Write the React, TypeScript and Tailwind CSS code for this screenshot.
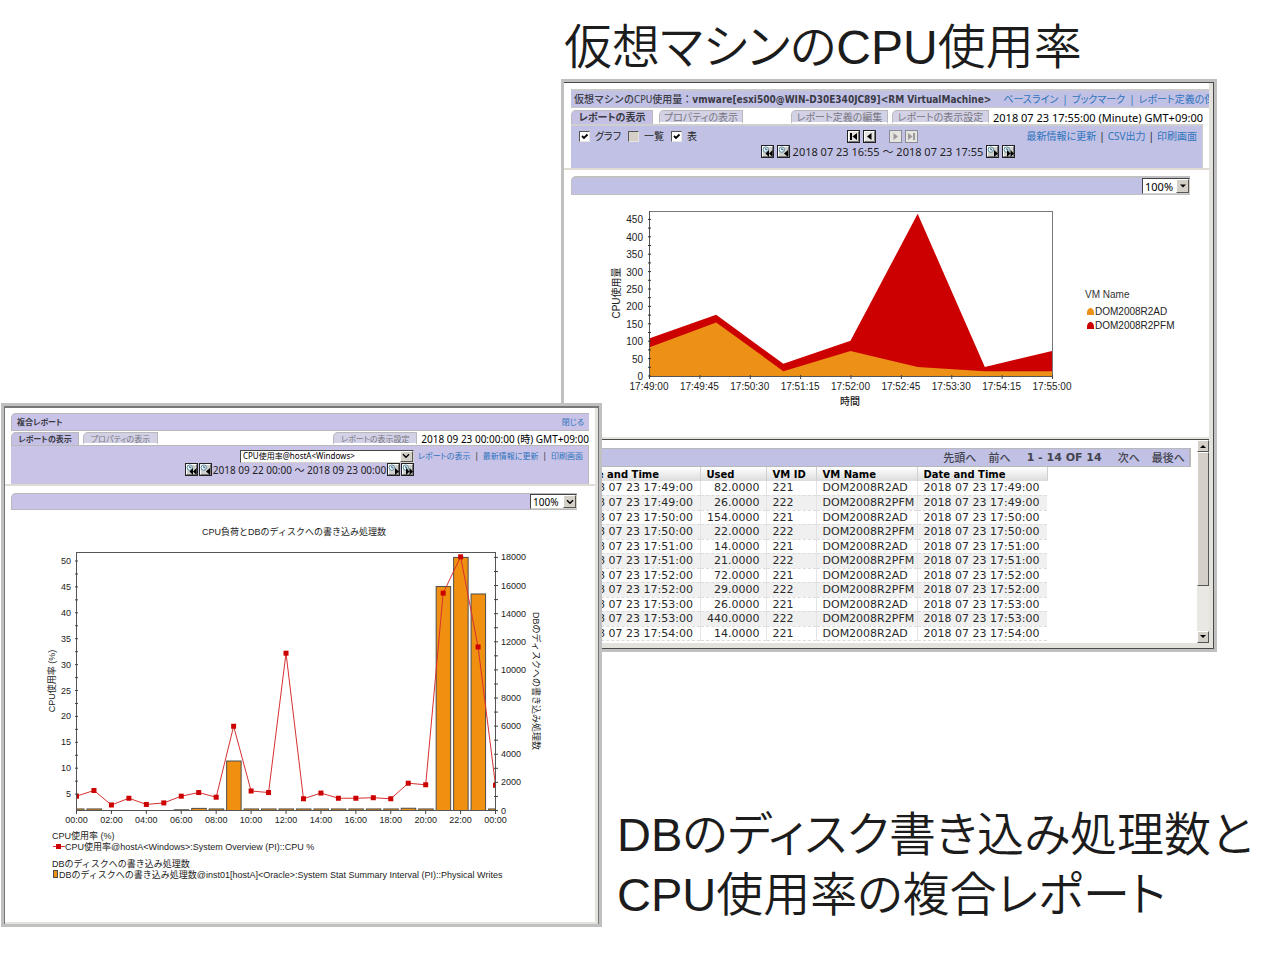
import type { ReactNode } from "react";
import clsx from "clsx";

const UI_FONT = "font-['Noto_Sans','Noto_Sans_CJK_JP',sans-serif] font-normal [font-feature-settings:'palt']";
const CHART_FONT = "font-['Liberation_Sans','Noto_Sans_CJK_JP',sans-serif] [font-feature-settings:normal]";

const vmRows = [
  { time: "2018 07 23 17:49:00", used: "82.0000", id: "221", name: "DOM2008R2AD" },
  { time: "2018 07 23 17:49:00", used: "26.0000", id: "222", name: "DOM2008R2PFM" },
  { time: "2018 07 23 17:50:00", used: "154.0000", id: "221", name: "DOM2008R2AD" },
  { time: "2018 07 23 17:50:00", used: "22.0000", id: "222", name: "DOM2008R2PFM" },
  { time: "2018 07 23 17:51:00", used: "14.0000", id: "221", name: "DOM2008R2AD" },
  { time: "2018 07 23 17:51:00", used: "21.0000", id: "222", name: "DOM2008R2PFM" },
  { time: "2018 07 23 17:52:00", used: "72.0000", id: "221", name: "DOM2008R2AD" },
  { time: "2018 07 23 17:52:00", used: "29.0000", id: "222", name: "DOM2008R2PFM" },
  { time: "2018 07 23 17:53:00", used: "26.0000", id: "221", name: "DOM2008R2AD" },
  { time: "2018 07 23 17:53:00", used: "440.0000", id: "222", name: "DOM2008R2PFM" },
  { time: "2018 07 23 17:54:00", used: "14.0000", id: "221", name: "DOM2008R2AD" },
];

const areaAd = [82, 154, 14, 72, 26, 14, 14];
const areaTotal = [108, 176, 35, 101, 466, 26, 72];
const areaTimes = ["17:49:00", "17:49:45", "17:50:30", "17:51:15", "17:52:00", "17:52:45", "17:53:30", "17:54:15", "17:55:00"];

const cpuLoad = [
  4.6, 5.7, 2.9, 4.2, 3, 3.3, 4.6, 5.3, 4.4, 18.1, 5.6, 5.3, 32.2,
  4.1, 5.2, 4.2, 4.2, 4.3, 4.1, 7.1, 6.8, 43.8, 50.8, 33.4, 6.7,
];
const diskWrites = [
  110, 110, 0, 0, 0, 0, 50, 150, 110, 3520, 110, 110, 110,
  110, 110, 110, 110, 110, 110, 160, 110, 15930, 18000, 15400, 110,
];

type IconKind = "first" | "prev" | "next" | "last" | "clockFirst" | "clockPrev" | "clockNext" | "clockLast";

const IconButton = ({ kind, label, disabled }: { kind: IconKind; label: string; disabled?: boolean }) => {
  const clock = kind.startsWith("clock");
  return (
    <button type="button" aria-label={label} disabled={disabled} className="block size-[13px] shrink-0">
      <svg viewBox="0 0 13 13" className="block size-full">
        <rect x="0.5" y="0.5" width="12" height="12" fill={clock ? "#d0d0cc" : "#e6e4e0"} stroke={disabled ? "#8c8c94" : "#222"} />
        {!disabled && <path d="M1.5 11.5V1.5h10" fill="none" stroke="#fff" />}
        {!disabled && <path d="M1.5 11.5h10V1.5" fill="none" stroke="#77777a" />}
        {clock && <circle cx="4.8" cy="4.6" r="2.7" fill="#e8fbff" stroke="#5b8ba0" />}
        {clock && <path d="M4.8 3v1.8h1.6" fill="none" stroke="#234" strokeWidth="0.8" />}
        <g fill={disabled ? "#9a9a9a" : "#000"}>
          {kind === "first" && <path d="M3 3h2v7H3zM10 3v7L5.5 6.5z" />}
          {kind === "prev" && <path d="M8.5 3v7L4 6.5z" />}
          {kind === "next" && <path d="M4.5 3v7L9 6.5z" />}
          {kind === "last" && <path d="M8 3h2v7H8zM3 3v7l4.5-3.5z" />}
          {kind === "clockFirst" && <path d="M8 5v7L4.500 8.500zM11.500 5v7L8 8.500z" />}
          {kind === "clockPrev" && <path d="M11 5v7L7 8.500z" />}
          {kind === "clockNext" && <path d="M8 5v7l4-3.500z" />}
          {kind === "clockLast" && <path d="M5 5v7l3.500-3.500zM8.500 5v7L12 8.500z" />}
        </g>
      </svg>
    </button>
  );
};

const Tab = ({ active, className, children }: { active?: boolean; className: string; children: ReactNode }) => (
  <button
    type="button"
    className={clsx(
      "h-full shrink-0 whitespace-nowrap rounded-tl-[5px] border-l border-t border-r border-[#b9b9bd] text-center",
      active ? "bg-[#c5c1e5] font-bold text-[#3a3a44]" : "border-b-2 border-b-white bg-[#d3d1e6] text-[#77777f]",
      className
    )}
  >
    {children}
  </button>
);

const Check = ({ label, checked, disabled }: { label: string; checked?: boolean; disabled?: boolean }) => (
  <label className="flex items-center gap-[5px]">
    <span className="relative block size-[11px]">
      <input
        type="checkbox"
        defaultChecked={checked}
        disabled={disabled}
        className="peer block size-[11px] appearance-none border border-b-[#e8e6e0] border-l-[#555] border-r-[#e8e6e0] border-t-[#555] bg-white disabled:bg-[#d4d0c8]"
      />
      <svg viewBox="0 0 11 11" className="pointer-events-none absolute inset-0 hidden size-[11px] peer-checked:block">
        <path d="M3 5l2 2 3.500-3.500" fill="none" stroke="#000" strokeWidth="1.8" />
      </svg>
    </span>
    {label}
  </label>
);

const Select = ({ label, value, solid, className }: { label: string; value: string; solid?: boolean; className: string }) => (
  <span className={clsx("relative block shrink-0", className)}>
    <select
      aria-label={label}
      className="block size-full appearance-none border border-b-[#d4d0c8] border-l-[#444] border-r-[#d4d0c8] border-t-[#444] bg-white pl-0.5 leading-none text-black"
    >
      <option>{value}</option>
    </select>
    <span className="pointer-events-none absolute inset-y-px right-px flex w-[13px] items-center justify-center border border-b-[#555] border-l-white border-r-[#555] border-t-white bg-[#d4d0c8]">
      <svg viewBox="0 0 8 6" className="h-1.5 w-2">
        {solid ? <path d="M1 1.5h6L4 4.5z" /> : <path d="M1 1.2l3 3 3-3" fill="none" stroke="#000" strokeWidth="1.4" />}
      </svg>
    </span>
  </span>
);

const Link = ({ children }: { children: ReactNode }) => (
  <a href="#" className="text-[#2f74bd]">{children}</a>
);

const AreaChart = () => {
  const x = (i: number, n: number) => 85 + (403 * i) / n;
  const y = (v: number) => 181 - v * 0.348;
  const line = (data: number[]) => data.map((v, i) => `${x(i, 6)},${y(v)}`).join(" ");

  return (
    <svg viewBox="0 0 645 238" className={clsx("block w-full text-[10px]", CHART_FONT)}>
      <rect x="85.5" y="16.5" width="403" height="165" fill="#fff" stroke="#777" />
      <polygon points={`85,181 ${line(areaTotal)} 488,181`} fill="#cc0000" />
      <polygon points={`85,181 ${line(areaAd)} 488,181`} fill="#ec9016" />
      <path d="M85.5 16v165.5H489" fill="none" stroke="#555" />
      {Array.from({ length: 19 }, (_, i) => (
        <path key={i} d={`M84 ${y(i * 25)}h3`} stroke="#333" />
      ))}
      {Array.from({ length: 10 }, (_, i) => (
        <text key={i} x="79" y={y(i * 50) + 4} textAnchor="end" fill="#222">{i * 50}</text>
      ))}
      {areaTimes.map((time, i) => (
        <g key={time}>
          <path d={`M${x(i, 8) + 0.5} 180v4`} stroke="#444" />
          <text x={x(i, 8)} y="195" textAnchor="middle" fill="#222">{time}</text>
        </g>
      ))}
      <text x="286" y="210" textAnchor="middle" fill="#222" className="font-medium">時間</text>
      <text transform="translate(56 98) rotate(-90)" textAnchor="middle" fill="#222">CPU使用量</text>
      <text x="521" y="103" fill="#333">VM Name</text>
      <path d="M523 120v-3q1-4 3.500-4t3.500 4v3z" fill="#ec9016" />
      <text x="531" y="120" fill="#222">DOM2008R2AD</text>
      <path d="M523 134v-3q1-4 3.500-4t3.500 4v3z" fill="#cc0000" />
      <text x="531" y="134" fill="#222">DOM2008R2PFM</text>
    </svg>
  );
};

const ComboChart = () => {
  const x = (hour: number) => 71.5 + hour * 17.46;
  const yCpu = (v: number) => 51 + (50 - v) * 5.18;
  const yDisk = (v: number) => 300.5 - v * 0.01406;

  return (
    <svg viewBox="0 0 590 412" className={clsx("block w-full text-[9px]", CHART_FONT)}>
      <text x="289" y="25" textAnchor="middle" fill="#222">CPU負荷とDBのディスクへの書き込み処理数</text>
      <clipPath id="comboPlot">
        <rect x="71" y="42" width="420" height="259" />
      </clipPath>
      <path d="M71.5 300.5V42.5H490.5V300.5z" fill="#fff" stroke="#555" />
      <g clipPath="url(#comboPlot)">
        {diskWrites.map((v, hour) => (
          v > 0 && (
            <rect key={hour} x={x(hour) - 7} y={yDisk(v)} width="14.5" height={300.5 - yDisk(v)} fill="#f09010" stroke="#4d4d4d" />
          )
        ))}
        <polyline points={cpuLoad.map((v, hour) => `${x(hour)},${yCpu(v)}`).join(" ")} fill="none" stroke="#d83030" />
        {cpuLoad.map((v, hour) => (
          <rect key={hour} x={x(hour) - 2.5} y={yCpu(v) - 2.5} width="5" height="5" fill="#cc0000" />
        ))}
      </g>
      <path d="M71.5 42V300.5H490.5V42" fill="none" stroke="#555" />
      {Array.from({ length: 19 }, (_, i) => (
        <path key={i} d={`M70 ${yCpu(5 + i * 2.5)}h3M489 ${yDisk(i * 1000)}h4`} stroke="#444" />
      ))}
      {Array.from({ length: 10 }, (_, i) => (
        <g key={i} fill="#222">
          <text x="66" y={yCpu(5 + i * 5) + 3} textAnchor="end">{5 + i * 5}</text>
          <text x="496" y={yDisk(i * 2000) + 3}>{i * 2000}</text>
        </g>
      ))}
      {Array.from({ length: 13 }, (_, i) => (
        <g key={i}>
          <path d={`M${x(i * 2)} 300v4`} stroke="#444" />
          <text x={x(i * 2)} y="313" textAnchor="middle" fill="#222">
            {`${String((i * 2) % 24).padStart(2, "0")}:00`}
          </text>
        </g>
      ))}
      <text transform="translate(50 171) rotate(-90)" textAnchor="middle" fill="#222">CPU使用率 (%)</text>
      <text transform="translate(528 171) rotate(90)" textAnchor="middle" fill="#222">DBのディスクへの書き込み処理数</text>
      <text x="47" y="329" fill="#222">CPU使用率 (%)</text>
      <path d="M48 336.5h12" stroke="#d83030" />
      <rect x="51" y="334" width="5" height="5" fill="#cc0000" />
      <text x="60" y="340" fill="#222">CPU使用率@hostA&lt;Windows&gt;:System Overview (PI)::CPU %</text>
      <text x="47" y="357" fill="#222">DBのディスクへの書き込み処理数</text>
      <rect x="48.5" y="360.5" width="4" height="7" fill="#f09010" stroke="#4d4d4d" />
      <text x="54" y="368" fill="#222">
        DBのディスクへの書き込み処理数@inst01[hostA]&lt;Oracle&gt;:System Stat Summary Interval (PI)::Physical Writes
      </text>
    </svg>
  );
};

const ResultTable = () => (
  <table className="w-[476px] table-fixed border-collapse font-['DejaVu_Sans',sans-serif] text-[11px] leading-[13px] text-[#2a2a2a]">
    <colgroup>
      <col className="w-[129px]" />
      <col className="w-[66px]" />
      <col className="w-[50px]" />
      <col className="w-[101px]" />
      <col className="w-[130px]" />
    </colgroup>
    <thead>
      <tr className="h-[14px] bg-linear-to-b from-white to-[#dcdcdc] text-left text-[10px] text-black">
        {["Date and Time", "Used", "VM ID", "VM Name", "Date and Time"].map((title, i) => (
          <th key={i} className="border-r border-[#d0d0d0] p-0 pl-1.5 font-bold">{title}</th>
        ))}
      </tr>
    </thead>
    <tbody>
      {vmRows.map((row, i) => (
        <tr key={i} className="border-b border-dashed border-[#dcdcdc] odd:h-[14px] even:h-[15px] even:bg-[#f0f0f0]">
          <td className="border-r border-[#e4e4e4] p-0 pl-1.5">{row.time}</td>
          <td className="border-r border-[#e4e4e4] p-0 pr-1.5 text-right">{row.used}</td>
          <td className="border-r border-[#e4e4e4] p-0 pl-1.5">{row.id}</td>
          <td className="border-r border-[#e4e4e4] p-0 pl-1.5">{row.name}</td>
          <td className="p-0 pl-1.5">{row.time}</td>
        </tr>
      ))}
    </tbody>
  </table>
);

const Scrollbar = () => (
  <div className="flex w-3 shrink-0 flex-col bg-[#eae8e4]">
    <button type="button" aria-label="上へ" className="flex h-3 items-center justify-center border border-b-[#555] border-l-white border-r-[#555] border-t-white bg-[#d4d0c8]">
      <svg viewBox="0 0 6 4" className="h-1 w-1.5"><path d="M0 4h6L3 1z" /></svg>
    </button>
    <div className="h-[134px] border border-b-[#555] border-l-white border-r-[#555] border-t-white bg-[#d4d0c8]" />
    <button type="button" aria-label="下へ" className="mt-auto flex h-3 items-center justify-center border border-b-[#555] border-l-white border-r-[#555] border-t-white bg-[#d4d0c8]">
      <svg viewBox="0 0 6 4" className="h-1 w-1.5"><path d="M0 0h6L3 3z" /></svg>
    </button>
  </div>
);

const VmReport = () => (
  <section className={clsx("mr-[52px] border-[3px] border-[#c0c0c0] bg-white text-[11px] leading-[13px] text-[#222]", UI_FONT)}>
    <div className="border-b border-r border-t border-[#4a4a4a]">
      <div className="border-b-[5px] border-r-4 border-[#e4e2dc]">
        <div className="overflow-hidden pl-[7px] pt-1.5">
          <div className="flex h-[19px] items-center whitespace-nowrap border-b border-t-2 border-[#c9c9cb] bg-[#c1c1e5] pl-[3px] text-[10px]">
            <h2 className="font-['DejaVu_Sans_Condensed','Noto_Sans_CJK_JP',sans-serif] font-bold text-[#3a3a44] [font-feature-settings:normal]">
              <span className="font-medium">仮想マシンのCPU使用量：</span>
              vmware[esxi500@WIN-D30E340JC89]&lt;RM VirtualMachine&gt;
            </h2>
            <nav className="ml-3 flex gap-1 text-[#2f74bd]">
              <Link>ベースライン</Link>|<Link>ブックマーク</Link>|<Link>レポート定義の保</Link>
            </nav>
          </div>
        </div>
        <div className="pl-[7px] pr-1.5 pt-0.5">
          <div className="flex h-[14px] items-center text-[10px]">
            <Tab active className="w-[82px]">レポートの表示</Tab>
            <Tab className="ml-1.5 w-[84px]">プロパティの表示</Tab>
            <Tab className="ml-auto w-[97px]">レポート定義の編集</Tab>
            <Tab className="ml-1 w-[97px]">レポートの表示設定</Tab>
            <span className="ml-1 whitespace-nowrap text-[11px] text-black">2018 07 23 17:55:00 (Minute) GMT+09:00</span>
          </div>
          <div className="flex h-11 flex-col border-r border-t-2 border-[#cfcfcf] bg-[#c1c1e5] pl-2 pr-[5px] pt-[3px]">
            <div className="flex h-[15px] items-center text-[10px]">
              <div className="flex w-[268px] gap-[7px]">
                <Check label="グラフ" checked />
                <Check label="一覧" disabled />
                <Check label="表" checked />
              </div>
              <div className="flex gap-[3px]">
                <IconButton kind="first" label="先頭" />
                <IconButton kind="prev" label="前" />
              </div>
              <div className="ml-[13px] flex gap-[3px]">
                <IconButton kind="next" label="次" disabled />
                <IconButton kind="last" label="最後" disabled />
              </div>
              <nav className="ml-auto flex gap-[3px]">
                <Link>最新情報に更新</Link>|<Link>CSV出力</Link>|<Link>印刷画面</Link>
              </nav>
            </div>
            <div className="flex h-[15px] items-center justify-center gap-[3px]">
              <IconButton kind="clockFirst" label="大きく戻る" />
              <IconButton kind="clockPrev" label="戻る" />
              <span>2018 07 23 16:55 ～ 2018 07 23 17:55</span>
              <IconButton kind="clockNext" label="進む" />
              <IconButton kind="clockLast" label="大きく進む" />
            </div>
          </div>
        </div>
        <div className="border-t-2 border-[#e0dcd4] pl-[7px] pr-[19px] pt-1.5">
          <div className="flex h-[19px] items-center justify-end rounded-tl-[5px] border-b border-l border-t-2 border-[#c0c0c4] bg-[#c1c1e5]">
            <Select label="表示倍率" value="100%" solid className="h-4 w-12" />
          </div>
        </div>
        <AreaChart />
        <div className="mt-1 border-t-2 border-[#e4e2dc]">
          <div className="flex h-[204px] border-t border-[#4a4a4a]">
            <div className="min-w-0 flex-1 overflow-hidden pl-[7px] pr-1.5 pt-2">
              <nav className="flex h-[19px] items-center justify-end gap-3 border-b border-r-2 border-t border-[#b8b8bc] bg-[#c1c1e5] pr-1 font-medium text-[#44444e]">
                <a href="#">先頭へ</a>
                <a href="#">前へ</a>
                <span className="mx-1 font-['DejaVu_Sans',sans-serif] font-bold">1 - 14 OF 14</span>
                <a href="#">次へ</a>
                <a href="#">最後へ</a>
              </nav>
              <ResultTable />
            </div>
            <Scrollbar />
          </div>
        </div>
      </div>
    </div>
  </section>
);

const ComboReport = () => (
  <section className={clsx("relative z-10 ml-px mt-[403px] border-[3px] border-[#c0c0c0] bg-white text-[8px] leading-[12px] text-[#222]", UI_FONT)}>
    <div className="border-l border-r border-t-2 border-[#777]">
      <div className="border-b-2 border-r-[3px] border-[#e4e2dc]">
        <div className="px-1.5 pt-[5px]">
          <div className="flex h-[18px] items-center justify-between rounded-tl-[5px] border-b border-l border-t border-[#b9b9bd] bg-[#c8c3e7] px-[5px]">
            <h2 className="font-bold text-[#3a3a44]">複合レポート</h2>
            <Link>閉じる</Link>
          </div>
          <div className="mt-px flex h-[13px] items-center">
            <Tab active className="w-[68px]">レポートの表示</Tab>
            <Tab className="ml-1 w-[75px]">プロパティの表示</Tab>
            <Tab className="ml-auto w-[84px]">レポートの表示設定</Tab>
            <span className="ml-1 whitespace-nowrap text-[10px] text-black">2018 09 23 00:00:00 (時) GMT+09:00</span>
          </div>
          <div className="flex h-[39px] flex-col border-r border-t border-[#b9b9bd] bg-[#c8c3e7] pt-[3px]">
            <div className="flex h-[14px] items-center justify-end gap-1 pr-[5px]">
              <Select label="レポート" value="CPU使用率@hostA<Windows>" className="h-[13px] w-[174px]" />
              <nav className="flex gap-1">
                <Link>レポートの表示</Link>|<Link>最新情報に更新</Link>|<Link>印刷画面</Link>
              </nav>
            </div>
            <div className="flex h-[13px] items-center justify-center gap-px text-[10px]">
              <IconButton kind="clockFirst" label="大きく戻る" />
              <IconButton kind="clockPrev" label="戻る" />
              <span>2018 09 22 00:00 ～ 2018 09 23 00:00</span>
              <IconButton kind="clockNext" label="進む" />
              <IconButton kind="clockLast" label="大きく進む" />
            </div>
          </div>
        </div>
        <div className="border-t-2 border-[#e0dcd4] pl-1.5 pr-[18px] pt-[7px]">
          <div className="flex h-[17px] items-center justify-end rounded-tl-[5px] border-b border-l border-t border-[#b9b9bd] bg-[#c8c3e7] text-[10px]">
            <Select label="表示倍率" value="100%" className="h-[15px] w-[47px]" />
          </div>
        </div>
        <ComboChart />
      </div>
    </div>
  </section>
);

const App = () => {
  return (
    <main className="grid min-h-screen grid-cols-[602fr_667fr] items-start bg-white">
      <ComboReport />
      <div className="-ml-[41px] min-w-0 font-['Liberation_Sans','Noto_Sans_CJK_JP',sans-serif] font-[350] leading-[60px] text-[#1c1c1c] [font-feature-settings:'palt']">
        <h1 className="h-[79px] whitespace-nowrap pl-[3px] pt-[18px] text-[48px] font-[350]">仮想マシンのCPU使用率</h1>
        <VmReport />
        <p className="mt-[153px] whitespace-nowrap pl-14 text-[47px]">
          DBのディスク書き込み処理数と
          <br />
          CPU使用率の複合レポート
        </p>
      </div>
    </main>
  );
};

export default App;
